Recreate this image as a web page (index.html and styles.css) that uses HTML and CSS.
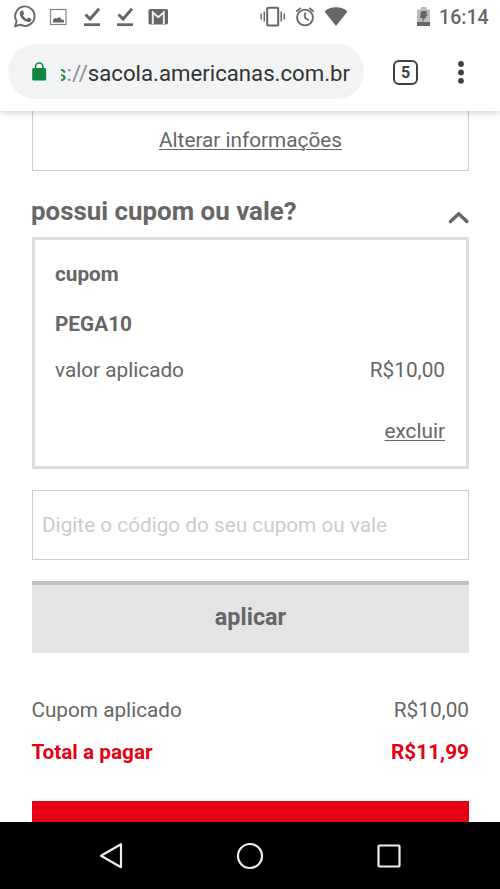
FILE: index.html
```html
<!DOCTYPE html>
<html lang="pt-BR">
<head>
<meta charset="utf-8">
<meta name="viewport" content="width=device-width, initial-scale=1">
<title>Sacola</title>
<link rel="stylesheet" href="styles.css">
</head>
<body>
<div class="phone">
  <header class="top">
    <div class="status">
      <svg class="status-icons" width="360" height="34" viewBox="0 0 360 34" fill="none">
        <path d="M15 26.400l1.600-5.200a9.700 9.700 0 1 1 3.700 3.500z" stroke="#666" stroke-width="1.900" stroke-linejoin="round"/>
        <path d="M21.200 10.800l1.400-.5 1.700 3.300-1.300 1.600c.9 1.900 2.100 3 4 3.900l1.500-1.700 3.100 1.600c0 2.200-1.600 3.300-3.300 3.100-4.600-.7-8.500-4.700-8.500-8.500 0-1.200.5-2.200 1.400-2.800z" fill="#666"/>
        <rect x="50.500" y="9.500" width="15.500" height="15" stroke="#858585" stroke-width="1.200"/>
        <path d="M53 22.500v-3l2-1.500 2 .5 2.500-1.500 2 2.500 2.500.5v2.500z" fill="#666"/>
        <g id="check">
          <path d="M85.500 14.500l4.600 4.600L99 8.800" stroke="#666" stroke-width="3"/>
          <path d="M84 24.700h16" stroke="#666" stroke-width="2.800"/>
        </g>
        <use href="#check" x="33"/>
        <rect x="148.500" y="9" width="19.500" height="15.500" rx="1.800" fill="#666"/>
        <path d="M152.800 24V12.300l5.500 4.900 5.500-4.900V24" stroke="#eee" stroke-width="1.900"/>
        <rect x="267.200" y="7.800" width="11" height="17.600" rx="1" stroke="#666" stroke-width="2"/>
        <path d="M264.300 11.500v10M261.200 13.500v6M281.200 11.500v10M284.300 13.500v6" stroke="#666" stroke-width="1.500"/>
        <circle cx="305" cy="17.500" r="7.900" stroke="#666" stroke-width="1.900"/>
        <path d="M305 12.500v5.300l3.800 2.400M296.200 11.600l4.500-3.800M313.800 11.600l-4.500-3.800" stroke="#666" stroke-width="1.700"/>
        <path d="M324.500 11.500c6-5.600 17-5.600 23 0L336 26z" fill="#666"/>
      </svg>
      <svg width="14" height="20" viewBox="0 0 14 20">
        <path d="M0 2.500h4V0h5.500v2.500H13V19H0z" fill="#bdbdbd"/>
        <path d="M0 15h13v4H0zM4 4h6L9.200 7.500H11L5 15l.8-4H3z" fill="#666"/>
      </svg>
      <span class="clock">16:14</span>
    </div>
    <div class="browser">
      <div class="address">
        <svg width="15" height="19" viewBox="0 0 15 19" fill="none">
          <rect x=".2" y="6" width="14" height="12.500" rx="1.500" fill="#108543"/>
          <path d="M3.500 7V4.700a3.700 3.700 0 0 1 7.400 0V7" stroke="#108543" stroke-width="1.500"/>
        </svg>
        <div class="url"><span class="scheme">s</span><span class="slashes">://</span>sacola.americanas.com.br</div>
      </div>
      <div class="tabs">5</div>
      <svg class="more" width="8" height="24" viewBox="0 0 8 24" fill="#3c4043"><circle cx="4" cy="3" r="2.900"/><circle cx="4" cy="11.400" r="2.900"/><circle cx="4" cy="19.800" r="2.900"/></svg>
    </div>
  </header>
  <main class="page">
    <div class="info"><a class="link">Alterar informações</a></div>
    <div class="heading">
      <h1>possui cupom ou vale?</h1>
      <svg width="21" height="13" viewBox="0 0 21 13" fill="none"><path d="M2.500 10.500l8.200-7.700 8.200 7.700" stroke="#666" stroke-width="3.400" stroke-linecap="round"/></svg>
    </div>
    <section class="coupon">
      <strong>cupom</strong>
      <strong class="code">PEGA10</strong>
      <div class="row"><span>valor aplicado</span><span>R$10,00</span></div>
      <a class="link remove">excluir</a>
    </section>
    <input class="field" type="text" placeholder="Digite o código do seu cupom ou vale">
    <button class="apply">aplicar</button>
    <div class="row discount"><span>Cupom aplicado</span><span>R$10,00</span></div>
    <div class="row total"><span>Total a pagar</span><span>R$11,99</span></div>
    <div class="continue"></div>
  </main>
  <nav class="nav">
    <svg width="26" height="28" viewBox="0 0 26 28" fill="none"><path d="M23 2.200v23L3 13.700z" stroke="#eee" stroke-width="2.200" stroke-linejoin="round"/></svg>
    <svg width="28" height="28" viewBox="0 0 28 28" fill="none"><circle cx="14" cy="14" r="12" stroke="#eee" stroke-width="2.200"/></svg>
    <svg width="26" height="28" viewBox="0 0 26 28" fill="none"><rect x="2.500" y="3.500" width="21" height="21" rx="1" stroke="#eee" stroke-width="2.200"/></svg>
  </nav>
</div>
</body>
</html>
```
FILE: styles.css
```css
* { box-sizing: border-box; }
body { margin: 0; background: #fff; color: #666; font: 20.75px/24px Roboto, sans-serif; }
.phone { width: 500px; height: 889px; display: flex; flex-direction: column; overflow: hidden; }
.top { height: 111px; flex: none; background: #fff; box-shadow: 0 1px 7px rgba(0, 0, 0, .22); z-index: 1; }
.status { height: 34px; display: flex; align-items: center; }
.status-icons { flex: none; margin-right: 57px; }
.clock { margin-left: 8px; padding-top: 1px; font-size: 19.6px; font-weight: 500; }
.browser { display: flex; align-items: center; padding: 10px 0 0 8px; }
.address { width: 356px; height: 55px; border-radius: 28px; background: #f1f3f4; display: flex; align-items: center; padding: 0 14px 0 24px; }
.url { flex: 1; display: flex; justify-content: flex-end; margin-left: 14px; padding-top: 2px; overflow: hidden; white-space: nowrap; font-size: 22.2px; line-height: 30px; color: #333; }
.scheme { color: #108543; }
.slashes { color: #8b8d8f; }
.tabs { width: 25px; height: 25px; margin: 1px 0 0 29px; border: 2.5px solid #3c4043; border-radius: 6px; text-align: center; font-size: 16px; line-height: 21px; font-weight: 700; color: #3c4043; }
.more { margin: 2px 0 0 39px; }
.page { flex: 1; min-height: 0; padding: 0 31px 0 32px; overflow: hidden; }
.info { height: 60px; padding-top: 17px; border: 1px solid #ccc; border-top: 0; text-align: center; }
.link { text-decoration: underline; text-decoration-thickness: 1px; text-underline-offset: 2px; }
.heading { height: 66px; padding-top: 25px; display: flex; justify-content: space-between; align-items: flex-start; }
.heading svg { margin-top: 15px; }
h1 { margin: 0 0 0 -1px; font-size: 25.9px; line-height: 30px; font-weight: 700; }
.coupon { height: 232px; padding: 22px 21px 0 20px; border: 3px solid #ddd; display: flex; flex-direction: column; }
.code { margin: 26px 0 22px; }
.row { display: flex; justify-content: space-between; }
.remove { align-self: flex-end; margin-top: 37px; }
.field { display: block; width: 100%; height: 70px; margin: 21px 0; padding: 0 9px; border: 1px solid #ccc; border-radius: 0; background: #fff; font: inherit; color: #666; }
.field::placeholder { color: #ccc; opacity: 1; }
.apply { display: block; width: 100%; height: 72px; padding: 0 0 5px; border: 0; border-top: 4px solid #c1c1c1; background: #e4e4e4; color: #666; font: 700 23.4px/28px Roboto, sans-serif; }
.discount { margin-top: 45px; }
.total { margin-top: 18px; color: #e60014; font-weight: 700; }
.discount, .total { margin-left: -.6px; }
.continue { height: 60px; margin-top: 37px; background: #e60014; }
.nav { height: 67px; flex: none; background: #000; display: flex; justify-content: center; align-items: center; gap: 112px; }
```
